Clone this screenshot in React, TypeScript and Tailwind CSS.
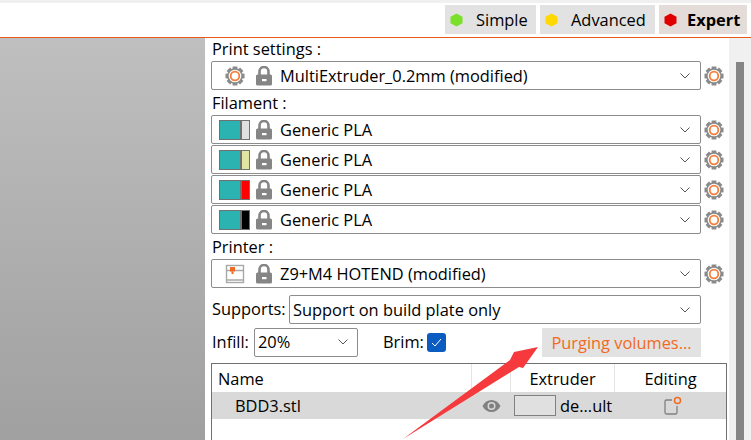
import type { ReactNode } from "react"

const font = { fontFamily: '"Open Sans", "Noto Sans", sans-serif' }

function Gear() {
  const teeth = [0, 45, 90, 135]
  return (
    <svg width="20" height="20" viewBox="0 0 20 20" className="shrink-0">
      {teeth.map((a) => (
        <rect key={a} x="7.600" y="0.500" width="4.800" height="19" fill="#8a8a8a" transform={`rotate(${a} 10 10)`} />
      ))}
      <circle cx="10" cy="10" r="7.800" fill="#8a8a8a" />
      <circle cx="10" cy="10" r="6.300" fill="#fff" />
      <circle cx="10" cy="10" r="4.300" fill="none" stroke="#f27f3a" strokeWidth="1.800" />
    </svg>
  )
}

function Lock() {
  return (
    <svg width="18" height="20" viewBox="0 0 18 20" className="shrink-0">
      <path d="M4.500 9V5.500a4.500 4.500 0 0 1 9 0V9" fill="none" stroke="#858585" strokeWidth="2.600" />
      <rect x="1" y="8.500" width="16" height="11" rx="1.500" fill="#858585" />
      <rect x="7" y="13" width="4.500" height="2.200" fill="#fff" />
    </svg>
  )
}

function Chevron() {
  return (
    <svg width="12" height="8" viewBox="0 0 12 8" className="shrink-0">
      <path d="M1.500 1.500L6 6l4.500-4.500" fill="none" stroke="#555" strokeWidth="1" />
    </svg>
  )
}

function Hex({ color }: { color: string }) {
  return (
    <svg width="13" height="14" viewBox="0 0 13 14" className="shrink-0">
      <path d="M6.500 0.500L12.500 3.700v6.600L6.500 13.500.5 10.300V3.700z" fill={color} />
    </svg>
  )
}

function Combo({ icon, label }: { icon: ReactNode; label: string }) {
  return (
    <div className="flex h-[29px] items-center gap-[3px]">
      <div className="flex h-full w-[490px] items-center rounded-[2px] border border-[#8c8c8c] bg-white pr-[9px]">
        <div className="flex w-[43px] justify-center pl-[2px]">{icon}</div>
        <Lock />
        <span className="ml-[7px] flex-1 pt-[2px] leading-none text-black">{label}</span>
        <Chevron />
      </div>
      <Gear />
    </div>
  )
}

function Swatch({ color }: { color: string }) {
  return (
    <div className="flex h-[20px] w-[31px] border border-[#707070]">
      <div className="w-[20px] bg-[#2ab3b0]" />
      <div className="w-[2px] bg-[#707070]" />
      <div className="flex-1" style={{ background: color }} />
    </div>
  )
}

function PrinterIcon() {
  return (
    <svg width="20" height="20" viewBox="0 0 20 20" className="shrink-0">
      <rect x="1.500" y="1.500" width="17" height="17" fill="#fff" stroke="#a8a8a8" strokeWidth="1.400" />
      <path d="M1 6.500h18M1 16h18" stroke="#a8a8a8" strokeWidth="1.400" />
      <rect x="5" y="3" width="5" height="4.500" fill="#f26a21" />
      <rect x="6.500" y="7.500" width="2" height="2.500" fill="#f26a21" />
    </svg>
  )
}

function ModeButton({ color, label, active, width }: { color: string; label: string; active?: boolean; width: string }) {
  return (
    <div className={`flex h-[29px] items-center pl-[5px] text-black ${width} ${active ? "bg-[#e4dcd8] font-bold" : "bg-[#e2e2e2]"}`}>
      <Hex color={color} />
      <span className={active ? "ml-[10px] pt-[1px]" : "ml-[13px] pt-[1px]"}>{label}</span>
    </div>
  )
}

function Arrow() {
  return (
    <svg width="751" height="440" viewBox="0 0 751 440" className="pointer-events-none absolute left-0 top-0">
      <path d="M403 439L510 360 514 352 538 347 523 368 519 367z" fill="#f5393c" />
    </svg>
  )
}

export default function App() {
  return (
    <div style={font} className="relative h-[440px] w-[751px] overflow-hidden bg-white text-[16.4px]">
      <div className="h-[3px] bg-[#f0f0f0]" />
      <div className="flex h-[34px] items-start justify-end gap-[4px] pr-[4px] pt-[2px]">
        <ModeButton color="#7be02a" label="Simple" width="w-[91px]" />
        <ModeButton color="#ffd800" label="Advanced" width="w-[115px]" />
        <ModeButton color="#e00000" label="Expert" width="w-[88px]" active />
      </div>
      <div className="h-[1px] bg-[#e8591f]" />

      <div className="flex h-[402px]">
        <div className="w-[205px] bg-gradient-to-b from-[#bfbfbf] to-[#a0a0a0]" />

        <div className="flex w-[524px] flex-col pl-[6px] text-black">
          <div className="flex h-[23px] items-center pl-[1px]">Print settings :</div>
          <Combo icon={<Gear />} label="MultiExtruder_0.2mm (modified)" />
          <div className="flex h-[25px] items-center pl-[1px] pt-[2px]">Filament :</div>
          <div className="flex flex-col gap-[1px]">
            <Combo icon={<Swatch color="#e0e0e0" />} label="Generic PLA" />
            <Combo icon={<Swatch color="#e0e4a0" />} label="Generic PLA" />
            <Combo icon={<Swatch color="#ff0000" />} label="Generic PLA" />
            <Combo icon={<Swatch color="#000000" />} label="Generic PLA" />
          </div>
          <div className="flex h-[25px] items-center pl-[1px] pt-[2px]">Printer :</div>
          <Combo icon={<PrinterIcon />} label="Z9+M4 HOTEND (modified)" />

          <div className="mt-[7px] flex h-[29px] items-center pl-[1px]">
            <span className="w-[77px]">Supports:</span>
            <div className="flex h-full w-[412px] items-center rounded-[2px] border border-[#8c8c8c] pl-[3px] pr-[9px]">
              <span className="flex-1 pt-[2px]">Support on build plate only</span>
              <Chevron />
            </div>
          </div>

          <div className="mt-[3px] flex h-[30px] items-center pl-[1px]">
            <span className="w-[42px]">Infill:</span>
            <div className="flex h-[29px] w-[104px] items-center rounded-[2px] border border-[#8c8c8c] pl-[3px] pr-[8px]">
              <span className="flex-1">20%</span>
              <Chevron />
            </div>
            <span className="ml-[25px] w-[44px]">Brim:</span>
            <div className="flex h-[19px] w-[19px] items-center justify-center rounded-[3px] bg-[#0a5cc0]">
              <svg width="11" height="9" viewBox="0 0 11 9">
                <path d="M1 5l3 3 6-7" fill="none" stroke="#fff" strokeWidth="1" />
              </svg>
            </div>
            <div className="ml-[96px] flex h-[29px] w-[159px] items-center justify-center bg-[#e2e2e2] pt-[2px] text-[#f26a21]">
              Purging volumes...
            </div>
          </div>

          <div className="mt-[6px] w-[516px] flex-1 border border-b-0 border-[#707070]">
            <div className="flex h-[28px] items-center">
              <div className="flex h-full w-[260px] items-center border-r border-[#e4e4e4] pl-[6px] pt-[2px]">Name</div>
              <div className="h-full w-[39px] border-r border-[#e4e4e4]" />
              <div className="flex h-full w-[104px] items-center justify-center border-r border-[#e4e4e4] pt-[2px]">Extruder</div>
              <div className="flex h-full flex-1 items-center justify-center pt-[2px]">Editing</div>
            </div>
            <div className="flex h-[27px] items-center bg-[#d9d9d9]">
              <span className="w-[260px] pl-[23px] pt-[2px]">BDD3.stl</span>
              <div className="flex w-[39px] justify-center">
                <svg width="19" height="14" viewBox="0 0 19 14">
                  <path d="M.5 7C2.500 3 6 1 9.500 1s7 2 9 6c-2 4-5.500 6-9 6s-7-2-9-6z" fill="#808080" />
                  <circle cx="9.500" cy="7" r="4" fill="#d9d9d9" />
                  <circle cx="9.500" cy="7" r="2.500" fill="#808080" />
                </svg>
              </div>
              <div className="ml-[3px] h-[21px] w-[42px] border border-[#808080] bg-[#e0e0e0]" />
              <span className="ml-[4px] w-[59px] pt-[2px]">de...ult</span>
              <div className="flex flex-1 justify-center">
                <svg width="20" height="20" viewBox="0 0 20 20">
                  <path d="M9 4H3.500a1.500 1.500 0 0 0-1.500 1.500v11A1.500 1.500 0 0 0 3.500 18h9a1.500 1.500 0 0 0 1.500-1.500V10" fill="none" stroke="#808080" strokeWidth="1.300" />
                  <circle cx="14.500" cy="4.500" r="3" fill="none" stroke="#f26a21" strokeWidth="1.500" />
                </svg>
              </div>
            </div>
          </div>
        </div>

        <div className="flex w-[22px] justify-center bg-[#f0f0f0] pt-[24px]">
          <div className="h-full w-[8px] bg-[#858585]" />
        </div>
      </div>

      <Arrow />
    </div>
  )
}
